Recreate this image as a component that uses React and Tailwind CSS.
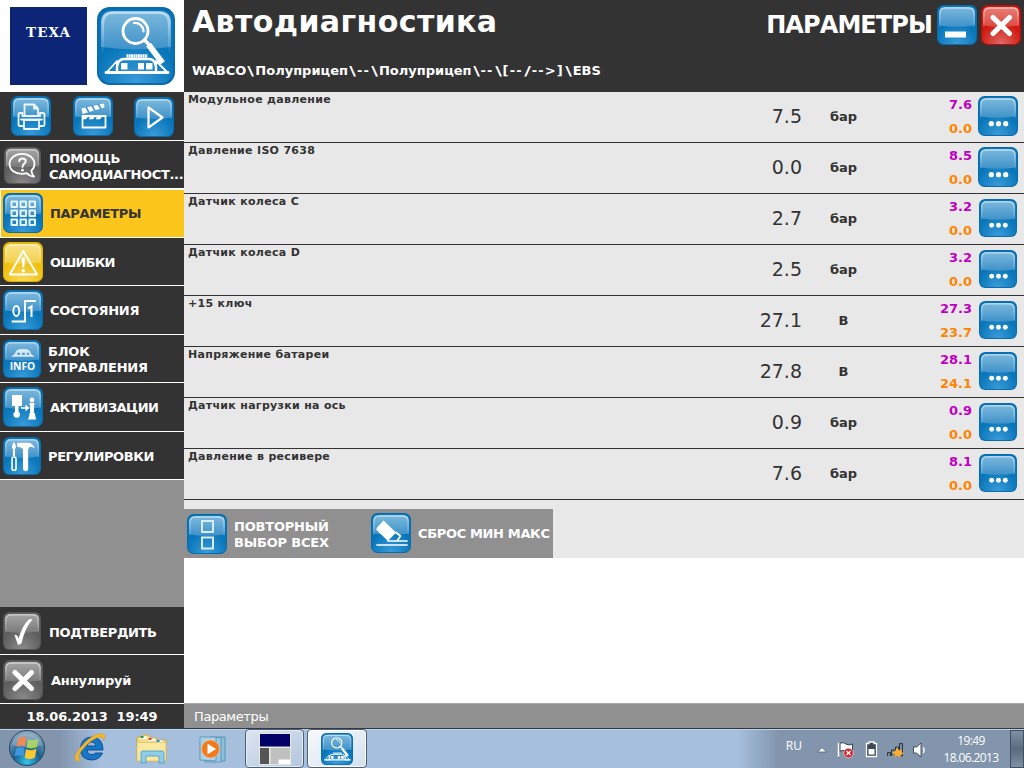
import React, { useId } from 'react';

const TONES = {
  blue: { edge: '#0a6cae', top: '#7db9dd', mid: '#3f92c9', low: '#0574b8', glow: '#3a9bd8' },
  gray: { edge: '#555555', top: '#a5a5a5', mid: '#7b7b7b', low: '#5c5c5c', glow: '#8a8a8a' },
  yellow: { edge: '#dcb000', top: '#f8e28a', mid: '#f3d04a', low: '#efbf0a', glow: '#f8d860' },
  red: { edge: '#b80f0a', top: '#e88078', mid: '#dc4a42', low: '#cf150d', glow: '#de6b64' },
};

// Glossy rounded square, glyphs are drawn in a 40x40 box
function Tile({ tone = 'blue', className = '', children }) {
  const id = useId().replace(/[^a-zA-Z0-9]/g, '');
  const t = TONES[tone];
  return (
    <svg viewBox="0 0 40 40" className={`block shrink-0 ${className}`}>
      <defs>
        <radialGradient id={`g${id}`} cx="0.5" cy="1" r="0.6">
          <stop offset="0" stopColor={t.glow} />
          <stop offset="1" stopColor={t.low} />
        </radialGradient>
        <linearGradient id={`s${id}`} x1="0" y1="0" x2="0" y2="1">
          <stop offset="0" stopColor={t.top} />
          <stop offset="1" stopColor={t.mid} />
        </linearGradient>
        <linearGradient id={`r${id}`} x1="0" y1="0" x2="0" y2="1">
          <stop offset="0" stopColor="#fff" stopOpacity="0.5" />
          <stop offset="0.8" stopColor="#fff" stopOpacity="0" />
        </linearGradient>
      </defs>
      <rect width="40" height="40" rx="6.5" fill={t.edge} />
      <rect x="1" y="1" width="38" height="38" rx="6" fill={`url(#g${id})`} />
      <path d="M2 8Q2 2 8 2H32Q38 2 38 8V20.500Q20 23 2 20.500Z" fill={`url(#s${id})`} />
      <path d="M3 30V8.500Q3 3 8.500 3H31.500Q37 3 37 8.500V30" fill="none" stroke={`url(#r${id})`} strokeWidth="1.300" />
      {children}
    </svg>
  );
}

const line = { fill: 'none', stroke: '#fff', strokeLinejoin: 'round', strokeLinecap: 'round' };

function ScanGlyph() {
  return (
    <g transform="scale(0.5128)">
      <circle cx="38.5" cy="24" r="12.500" {...line} strokeWidth="2.800" />
      <path d="M37 16a8.500 8.500 0 0 1 9.500 8.500" {...line} strokeWidth="2.200" />
      <path d="M47.500 33L51 36.500" {...line} strokeWidth="3.500" />
      <path d="M51.500 37.500L65.500 56" {...line} strokeWidth="6" strokeLinecap="butt" />
      <path d="M29.500 49H50.500" fill="none" stroke="#fff" strokeWidth="3.500" strokeDasharray="1.900 0.400" />
      <path d="M20 65V60Q21 52 27 52H52Q58 52 59 60V65" {...line} strokeWidth="2.400" />
      <path d="M9 65.500H71" {...line} strokeWidth="2.800" />
      <path d="M10 65L20 54V65ZM70 65L59 54V65Z" {...line} strokeWidth="1.800" />
      <path d="M24 56h6.500v6.500H24ZM41 56h6v6.500h-6ZM49 56h6.500v6.500H49Z" fill="#fff" />
    </g>
  );
}

function PrinterGlyph() {
  return (
    <g {...line} strokeWidth="1.800" stroke="#eef7fd">
      <path d="M13.500 19V8.500H23L27 12.500V19M23 8.500V12.500H27" />
      <path d="M12 30H9Q7.500 30 7.500 28.500V18.500Q7.500 17 9 17H11.500V20H29V17H31.500Q33.500 17 33.500 18.500V28.500Q33.500 30 32 30H29" />
      <path d="M13 24H28V33H13Z" />
      <path d="M10 23.500H31" />
    </g>
  );
}

function ClapperGlyph() {
  return (
    <g>
      <path d="M9.500 20H32.500V31.500H9.500Z" {...line} strokeWidth="1.800" />
      <path d="M10 20L9.500 23H13L15 20ZM18 20L16 23H20L22 20ZM25 20L23 23H27L29 20Z" fill="#fff" stroke="#fff" strokeWidth="0.600" />
      <path d="M8.500 12.500L31 7.500L31.500 11.500L9.500 18Z" fill="#fff" />
      <path d="M13 11L16 16.500M19 9.500L22 15M25 8L28 13" stroke="#4496cb" strokeWidth="1.600" />
    </g>
  );
}

function HelpGlyph() {
  return (
    <g>
      <path d="M29.500 25.500C32 23.500 33 21 33 18.500C33 12 27 7.500 19.500 7.500S6 12 6 18.500S12 29 19.500 29C21.500 29 23 28.800 24.500 28.200Q27.500 31.500 32.500 32Q30 29.500 29.500 25.500Z" {...line} strokeWidth="1.900" />
      <path d="M16.500 15.500C16.500 11.500 23.500 11.500 23.500 15.500C23.500 18 20 18 20 21.500" {...line} strokeWidth="2.100" />
      <circle cx="20" cy="25" r="1.400" fill="#fff" />
    </g>
  );
}

function GridGlyph() {
  return (
    <g {...line} strokeWidth="2" stroke="#e4f3fc">
      {[8.5, 17.5, 26.5].map(y =>
        [8.5, 17.5, 26.5].map(x => <rect key={`${x}-${y}`} x={x} y={y} width="5.500" height="5.500" />)
      )}
    </g>
  );
}

function WarnGlyph() {
  return (
    <g>
      <path d="M20.300 9L34 32.500H6.700Z" {...line} strokeWidth="1.900" />
      <path d="M18.500 15.500H22.100L21.300 25.500H19.300Z" fill="#fff" />
      <circle cx="20.300" cy="28.700" r="1.700" fill="#fff" />
    </g>
  );
}

function StateGlyph() {
  return (
    <g {...line} strokeLinejoin="miter" strokeLinecap="butt">
      <ellipse cx="13.300" cy="21" rx="3" ry="5" strokeWidth="1.900" />
      <path d="M8.700 31.500H22V11H33" strokeWidth="1.900" />
      <path d="M25 18.500L28.500 16.300V27" strokeWidth="2" />
    </g>
  );
}

function InfoGlyph() {
  return (
    <g>
      <path d="M8.500 17.500L12.500 14.500Q13.500 10 18 9.500H24Q28.500 10 29.500 14.500L33.500 17.500Z" fill="#d5eaf6" />
      <path d="M15 13.500h3v2h-3ZM20 13.500h3v2h-3ZM25 13.500h2.500v2H25Z" fill="#4b9bce" />
      <text x="20.500" y="31.500" textAnchor="middle" textLength="27" lengthAdjust="spacingAndGlyphs" fill="#fff" fontFamily="Open Sans, sans-serif" fontWeight="700" fontSize="11">INFO</text>
    </g>
  );
}

function ActivateGlyph() {
  return (
    <g fill="#fff">
      <path d="M9 8H19V19H15.500V25H12V19H9Z" />
      <circle cx="13.700" cy="27.500" r="3.200" />
      <path d="M18 20.200H22.500V17.500L26.500 21L22.500 24.500V21.800H18Z" />
      <circle cx="29" cy="13" r="2.400" />
      <path d="M26.500 16H31.500V18H31V26H32V27.500L33 32.500H25L26.500 27.500V26H27V18H26.500Z" />
    </g>
  );
}

function ToolsGlyph() {
  return (
    <g fill="#fff">
      <path d="M11.500 5L13.500 9V12H12.600V20H10.400V12H9.500V9Z" />
      <rect x="9.500" y="21" width="4.200" height="14" rx="1.900" fill="none" stroke="#fff" strokeWidth="1.700" />
      <path d="M15 6H26Q31.500 6 33.500 12Q30.500 9.500 27.500 10.500V12H26.500V33.500Q26.500 36 23.800 36T21 33.500V12H20Q18.500 10.500 15 10.500Z" />
    </g>
  );
}

function CheckGlyph() {
  return <path d="M12 24Q15 23.500 16.500 28Q20 14 27.500 7.500Q29.500 7 31 8Q23 17 19.500 33Q17 35.500 15.500 34Z" fill="#fff" />;
}

function CrossGlyph() {
  return <path d="M12 12.500L28.500 28.500M28.500 12.500L12 28.500" {...line} strokeWidth="5.200" />;
}

const MENU = [
  { label: 'ПОМОЩЬ\nСАМОДИАГНОСТ...', tone: 'gray', Glyph: HelpGlyph, row: 'h-[49px] border-b-2', icon: 'ml-1 mt-1.5 size-[37px]', text: 'ml-2 pt-[5px] tracking-[-0.35px]' },
  { label: 'ПАРАМЕТРЫ', active: true, Glyph: GridGlyph, row: 'h-12 border-b border-l', icon: 'ml-0.5 mt-[3px] size-10', text: 'ml-[7px] tracking-[-0.35px]' },
  { label: 'ОШИБКИ', tone: 'yellow', Glyph: WarnGlyph, row: 'h-12 border-b', icon: 'ml-[3px] mt-1 size-10', text: 'ml-[7px] pt-0.5 tracking-[-0.8px]' },
  { label: 'СОСТОЯНИЯ', Glyph: StateGlyph, row: 'h-[49px] border-b', icon: 'ml-[3px] mt-1 size-10', text: 'ml-[7px] pt-0.5 tracking-[-0.3px]' },
  { label: 'БЛОК\nУПРАВЛЕНИЯ', Glyph: InfoGlyph, row: 'h-12 border-b', icon: 'ml-[3px] mt-[5px] size-[38px]', text: 'ml-[7px] pt-[3px] tracking-[-0.2px]' },
  { label: 'АКТИВИЗАЦИИ', Glyph: ActivateGlyph, row: 'h-[49px] border-b', icon: 'ml-[3px] mt-1 size-10', text: 'ml-[7px] pt-0.5 tracking-[-0.55px]' },
  { label: 'РЕГУЛИРОВКИ', Glyph: ToolsGlyph, row: 'h-12 border-b', icon: 'ml-[3px] mt-[5px] size-[38px]', text: 'ml-[7px] pt-0.5 tracking-[-0.4px]' },
];

const ACTIONS = [
  { label: 'ПОДТВЕРДИТЬ', tone: 'gray', Glyph: CheckGlyph, row: 'h-12 border-b', icon: 'ml-[3px] mt-[5px] size-[38px]', text: 'ml-2 pt-[5px] tracking-[-0.4px]' },
  { label: 'Аннулируй', tone: 'gray', Glyph: CrossGlyph, row: 'h-[49px] border-b', icon: 'ml-[3px] mt-[5px] size-10', text: 'ml-2 pt-1 tracking-[-0.2px]' },
];

const PARAMS = [
  { name: 'Модульное давление', value: '7.5', unit: 'бар', max: '7.6', min: '0.0' },
  { name: 'Давление ISO 7638', value: '0.0', unit: 'бар', max: '8.5', min: '0.0' },
  { name: 'Датчик колеса C', value: '2.7', unit: 'бар', max: '3.2', min: '0.0' },
  { name: 'Датчик колеса D', value: '2.5', unit: 'бар', max: '3.2', min: '0.0' },
  { name: '+15 ключ', value: '27.1', unit: 'В', max: '27.3', min: '23.7' },
  { name: 'Напряжение батареи', value: '27.8', unit: 'В', max: '28.1', min: '24.1' },
  { name: 'Датчик нагрузки на ось', value: '0.9', unit: 'бар', max: '0.9', min: '0.0' },
  { name: 'Давление в ресивере', value: '7.6', unit: 'бар', max: '8.1', min: '0.0' },
];

const PATH = 'WABCO\\Полуприцеп\\--\\Полуприцеп\\--\\[--/-->]\\EBS';

function MenuRow({ item }) {
  const { Glyph } = item;
  return (
    <button className={`flex w-full items-start border-white text-left ${item.row} ${item.active ? 'bg-[#fbc51b] text-[#333]' : 'bg-[#333] text-white'}`}>
      <Tile tone={item.tone} className={item.icon}><Glyph /></Tile>
      <span className={`flex h-full items-center whitespace-pre text-[13px] leading-4 font-bold ${item.text}`}>{item.label}</span>
    </button>
  );
}

function Sidebar() {
  return (
    <aside className="flex w-[184px] shrink-0 flex-col bg-[#909090]">
      <div className="flex h-[92px] items-start bg-white">
        <div className="mt-[7px] ml-2.5 h-[78px] w-[77px] bg-[#0c2577] pt-4 text-center font-['DejaVu_Serif',serif] text-[13.5px] leading-[18px] font-bold tracking-[1px] text-white">
          TEXA
        </div>
        <Tile className="mt-[7px] ml-2.5 size-[78px]"><ScanGlyph /></Tile>
      </div>
      <div className="flex h-[49px] items-start border-b border-white bg-[#333]">
        <Tile className="mt-1 ml-[11px] size-10"><PrinterGlyph /></Tile>
        <Tile className="mt-1 ml-[22px] size-10"><ClapperGlyph /></Tile>
        <Tile className="mt-[5px] ml-[21px] size-10">
          <path d="M14.500 10.500V30.500L28.500 20.500Z" {...line} strokeWidth="2.200" />
        </Tile>
      </div>
      {MENU.map(item => <MenuRow key={item.label} item={item} />)}
      <div className="flex-1" />
      {ACTIONS.map(item => <MenuRow key={item.label} item={item} />)}
      <div className="h-6 bg-[#333] text-center text-[13px] leading-[26px] font-bold tracking-[-0.1px] whitespace-pre text-white">18.06.2013  19:49</div>
    </aside>
  );
}

function Breadcrumb() {
  return (
    <div className="pt-[23px] text-[13px] leading-4 whitespace-nowrap">
      {PATH.split(/([\\/]|[-[\]>]+)/).filter(Boolean).map((part, i) => {
        if (part === '\\' || part === '/') {
          return <span key={i} className="inline-block w-[9px] scale-x-140 text-center">{part}</span>;
        }
        return <span key={i} className={/^[-[\]>]/.test(part) ? 'tracking-[1.1px]' : ''}>{part}</span>;
      })}
    </div>
  );
}

function ParamRow({ param, small }) {
  return (
    <div className="flex h-[51px] border-b border-[#333]">
      <div className="w-[540px] pl-1 text-[11px] leading-[15px] font-bold tracking-[0.3px]">{param.name}</div>
      <div className="w-[78px] text-right text-[19px] leading-[49px]">{param.value}</div>
      <div className="w-[83px] text-center text-[13px] leading-[49px] font-bold">{param.unit}</div>
      <div className="w-[87px] pt-px text-right text-[13px] leading-6 font-bold">
        <div className="text-[#c000c0]">{param.max}</div>
        <div className="text-[#ff8400]">{param.min}</div>
      </div>
      <Tile className={small ? 'mt-[5px] ml-[7px] size-[38px]' : 'mt-1 ml-1.5 size-10'}>
        <g fill="#fff">
          <circle cx="13.300" cy="27.700" r="2.600" />
          <circle cx="20.500" cy="27.700" r="2.600" />
          <circle cx="27.700" cy="27.700" r="2.600" />
        </g>
      </Tile>
    </div>
  );
}

function Main() {
  return (
    <main className="flex w-[840px] flex-col bg-white text-[#333]">
      <header className="flex h-[92px] justify-between bg-[#333] text-white">
        <div className="pl-2 font-bold">
          <h1 className="pt-1 text-[30px] leading-9 tracking-[0.4px]">Автодиагностика</h1>
          <Breadcrumb />
        </div>
        <div className="flex items-start pt-[5px] pr-[3px]">
          <h2 className="pt-1 pr-[5px] text-[24px] leading-8 font-bold tracking-[-0.9px]">ПАРАМЕТРЫ</h2>
          <Tile className="size-10"><rect x="8" y="26.500" width="21" height="6" fill="#fff" /></Tile>
          <Tile tone="red" className="ml-1 size-10"><CrossGlyph /></Tile>
        </div>
      </header>
      <section className="h-[466px] bg-[#e8e8e8]">
        {PARAMS.map((p, i) => <ParamRow key={p.name} param={p} small={i > 1} />)}
        <div className="mt-[9px] flex h-[49px] w-[369px] bg-[#909090] text-[13px] leading-4 font-bold whitespace-pre text-white">
          <Tile className="mt-[5px] ml-[3px] size-10">
            <path d="M15 7H26V18H15ZM15 23.500H26V34.500H15Z" fill="none" stroke="#d9edf9" strokeWidth="2" />
          </Tile>
          <span className="w-36 shrink-0 pt-2.5 pl-[7px] tracking-[-0.2px]">{'ПОВТОРНЫЙ\nВЫБОР ВСЕХ'}</span>
          <Tile className="mt-1 size-10">
            <path d="M12.500 7.500L25 19.500L17 28L5.500 17Q5 15.500 6.500 14Z" fill="#fff" />
            <path d="M25 19.500L29.500 23L26 28H17M6 32H36M26 28H36" {...line} strokeWidth="1.700" />
          </Tile>
          <span className="pt-[17px] pl-[7px] tracking-[-0.35px]">СБРОС МИН МАКС</span>
        </div>
      </section>
      <div className="flex-1" />
      <footer className="h-[25px] border-t border-[#aaa] bg-[#909090] pl-2.5 text-[13px] leading-[25px] tracking-[-0.4px] text-white">Параметры</footer>
    </main>
  );
}

function StartOrb() {
  return (
    <svg viewBox="0 0 36 36" className="size-9">
      <defs>
        <radialGradient id="orb" cx="0.5" cy="0.9" r="0.85">
          <stop offset="0" stopColor="#35c3ee" />
          <stop offset="0.45" stopColor="#17618f" />
          <stop offset="1" stopColor="#8aa6bd" />
        </radialGradient>
      </defs>
      <circle cx="18" cy="18" r="17.500" fill="url(#orb)" stroke="#24435d" />
      <path d="M9.500 8.500Q13.500 5.500 17.500 8L16 16.500Q12 14.500 7.500 17Z" fill="#ee6b2e" />
      <path d="M19 9Q24 11.500 29.500 8.500L28 17Q22 20 17.500 17.500Z" fill="#93c845" />
      <path d="M7.200 18.500Q12 16 15.700 18.500L14.500 26.500Q10.500 24 5.500 26.500Z" fill="#3f97e0" />
      <path d="M17 19Q22 21.500 27.500 18.800L26 27.500Q20 30.500 15.700 27.500Z" fill="#fbc92f" />
      <path d="M3 15A15.500 15.500 0 0 1 33 15Q18 20 3 15Z" fill="#fff" opacity="0.2" />
    </svg>
  );
}

function ExplorerE() {
  return (
    <svg viewBox="0 0 34 32" className="h-8 w-[34px]">
      <path d="M29.500 21Q26.500 28 18.500 28Q7.500 27.500 7.500 16.500Q8 5.500 18.500 5Q30 5.500 30 18H14Q14.500 22.500 18.500 22.500Q21.500 22.500 22.500 21ZM14 14H23Q22.500 10 18.500 10Q14.500 10 14 14Z" fill="#1578c6" stroke="#0b4590" strokeWidth="0.900" fillRule="evenodd" />
      <path d="M5 29.500Q-2 27.500 7 16Q19 1 29 1.500Q34 2.500 30.500 9Q30.500 4.500 27 5Q19 6 9 18Q3 26 7.500 28Z" fill="#f4b92a" stroke="#cf8e12" strokeWidth="0.400" />
    </svg>
  );
}

function FolderIcon() {
  return (
    <svg viewBox="0 0 34 32" className="h-8 w-[34px]">
      <path d="M2 4H7L8 2H14L16 5H22L23 7H31V28H2Z" fill="#f2dc83" stroke="#c9a94d" />
      <path d="M5 3.500h7v2.500H5ZM13 5.500h7v2.500h-7ZM21 7.500h7v2.500h-7Z" fill="#fff" />
      <path d="M5.500 3h3v2h-3Z" fill="#1b9a35" />
      <path d="M13.500 5h3v2h-3Z" fill="#d2452c" />
      <path d="M21.500 7h3v2h-3Z" fill="#2c8bd0" />
      <path d="M2 9.500H31V28H2Z" fill="#f8e8a0" stroke="#d3b864" strokeWidth="0.600" />
      <path d="M6 30V20Q6 18 8 18H27Q29 18 29 20V30H24V23H11V30Z" fill="#8fcdea" stroke="#4a9ac6" strokeWidth="0.800" />
    </svg>
  );
}

function PlayerIcon() {
  return (
    <svg viewBox="0 0 32 30" className="h-[30px] w-8">
      <path d="M12 3H27V27H12Z" fill="#8dbfdb" stroke="#4f8eb3" strokeWidth="0.800" />
      <path d="M7 3.500H23V28H7Z" fill="#9bcae3" stroke="#4f8eb3" strokeWidth="0.800" />
      <path d="M2 3H18V27L2 26Z" fill="#a9d2e8" stroke="#4f8eb3" strokeWidth="0.800" />
      <circle cx="12.500" cy="15" r="9" fill="#f27a1a" stroke="#f9c08d" strokeWidth="0.700" />
      <path d="M9.500 9.500V20.500L18 15Z" fill="#fff" />
    </svg>
  );
}

function TrayIcons() {
  return (
    <svg viewBox="0 0 116 22" className="mt-2.5 ml-3.5 h-[22px] w-[116px]">
      <path d="M1.500 13L6 8.500L10.500 13Z" fill="#fff" stroke="#4b5c70" strokeWidth="0.800" />
      <path d="M22.500 3V18.500M24 4Q28 3 30 5Q33 7 36.500 5V12.500Q33 13.500 30 12Q27 11 24 12Z" fill="#fff" stroke="#38434f" strokeWidth="1" />
      <path d="M22.500 3.500V18" stroke="#fff" strokeWidth="1.500" />
      <circle cx="32.500" cy="14" r="4.800" fill="#d8262c" stroke="#fff" strokeWidth="0.500" />
      <path d="M30.500 12L34.500 16M34.500 12L30.500 16" stroke="#fff" strokeWidth="1.400" />
      <path d="M53 4.500V3H58V4.500H60.500V17.500H50.500V4.500Z" fill="#3d4855" stroke="#f8fafc" strokeWidth="1.300" />
      <path d="M52.500 10H58.500V15.500H52.500Z" fill="#fff" />
      <path d="M71.500 17V13.500H74.500V17M75.500 17V11H78.500V17M79.500 17V8H82.500V17M83.500 17V4.500H86.500V17Z" fill="#7b8896" stroke="#2e3741" strokeWidth="1" />
      <path d="M81.500 8.500L83 11.500L86 10L85.500 13L88 14.500L85 15.500L84 18.500L81.500 16.500L78.500 18L78.500 15L76 13.500L79 12Z" fill="#fbb034" />
      <path d="M97.500 8V14H100.500L105 18V4L100.500 8Z" fill="#fff" stroke="#38434f" strokeWidth="0.900" />
      <path d="M107 8.500Q109.500 11 107 14" fill="none" stroke="#fff" strokeWidth="1.300" />
    </svg>
  );
}

function Taskbar() {
  return (
    <div className="flex h-10 border-t border-[#333a44] bg-[linear-gradient(90deg,#8295ad_0,#8295ad_60px,#a5bfdd_100px,#a5bfdd_738px,#8295ad_778px,#8295ad_100%)] text-white shadow-[inset_0_1px_0_#bcd0e6]">
      <div className="mt-px ml-[9px]"><StartOrb /></div>
      <div className="mt-[3px] ml-7"><ExplorerE /></div>
      <div className="mt-1 ml-[28px]"><FolderIcon /></div>
      <div className="mt-[5px] ml-[29px]"><PlayerIcon /></div>
      <div className="ml-[15px] flex h-[39px] w-[59px] items-center justify-center rounded-sm border border-[#4d5f76] bg-linear-to-br from-[#dce6f2] to-[#b3c6dc] shadow-[inset_0_0_0_1px_#e4edf7]">
        <svg viewBox="0 0 32 32" className="size-8">
          <path d="M0 0H32V32H0Z" fill="#e8e8e0" />
          <path d="M1 1H31V13.500H1Z" fill="#000066" />
          <path d="M1 15H10V31H1Z" fill="#555" />
          <path d="M11.500 15H31V31H11.500Z" fill="#c0c0c0" />
          <path d="M19.500 26.500H31V31H19.500Z" fill="#fff" />
        </svg>
      </div>
      <div className="ml-[3px] flex h-[39px] w-[60px] items-center justify-center rounded-sm border border-[#4d5f76] bg-linear-to-br from-[#f7fafd] to-[#d3e0ee] shadow-[inset_0_0_0_1px_#fff]">
        <Tile className="size-8"><ScanGlyph /></Tile>
      </div>
      <div className="ml-auto flex font-['Open_Sans',sans-serif] text-[12px]">
        <span className="pt-2 leading-[18px]">RU</span>
        <TrayIcons />
        <div className="w-[78px] pt-[3px] text-center leading-[17px] tracking-[-0.6px]">
          <div>19:49</div>
          <div>18.06.2013</div>
        </div>
        <div className="mt-px w-[14px] border border-[#41505f] bg-linear-to-b from-[#8090a3] via-[#5a6b7e] to-[#7e90a5]" />
      </div>
    </div>
  );
}

export default function App() {
  return (
    <div className="flex h-[768px] w-[1024px] flex-col overflow-hidden font-['DejaVu_Sans',sans-serif]">
      <div className="flex h-[728px]">
        <Sidebar />
        <Main />
      </div>
      <Taskbar />
    </div>
  );
}
